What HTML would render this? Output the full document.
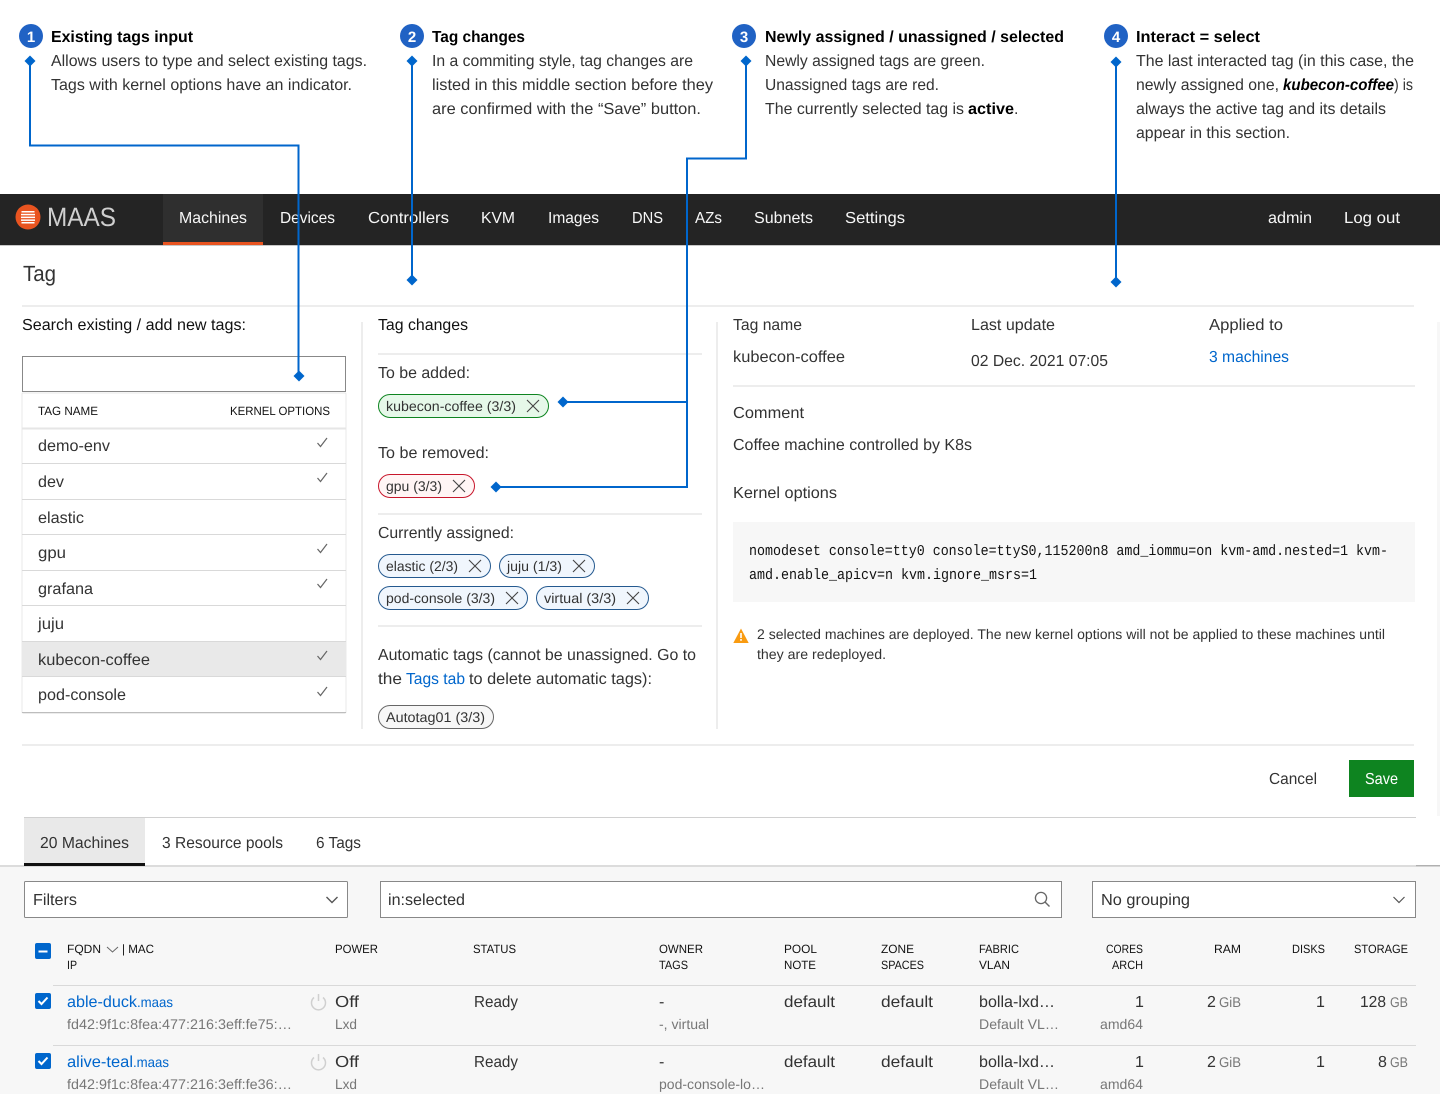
<!DOCTYPE html>
<html lang="en"><head><meta charset="utf-8"><title>MAAS Tag annotated</title>
<style>
html,body{margin:0;padding:0;background:#fff;width:1440px;height:1094px;overflow:hidden}
svg{display:block}
text{font-family:"Liberation Sans",sans-serif;font-size:16px;fill:#333;white-space:pre;text-rendering:geometricPrecision}
.b{font-weight:bold;fill:#000}
.d{fill:#111}
.n{fill:#f7f7f7}
.c{font-size:14px;fill:#333}
.h{font-size:12px;fill:#111}
.g{font-size:14px;fill:#777}
.a{fill:#0066cc}
.as{font-size:14px;fill:#0066cc}
.m{font-family:"Liberation Mono",monospace;font-size:15px;fill:#111}
.num{font-weight:bold;fill:#fff;font-size:15px;text-anchor:middle}
.x{stroke:#444;stroke-width:1.1;fill:none}
.ck{stroke:#666;stroke-width:1.2;fill:none}
.bl{stroke:#0066cc;stroke-width:2;fill:none}
.r{fill:#ededed}
.r2{fill:#d9d9d9}
</style></head><body>
<svg xmlns="http://www.w3.org/2000/svg" width="1440" height="1094" viewBox="0 0 1440 1094">
<rect width="1440" height="1094" fill="#fff"/>

<!-- annotations -->
<circle cx="31" cy="36" r="12" fill="#2062c4"/><text class="num" x="31" y="42">1</text>
<circle cx="412" cy="36" r="12" fill="#2062c4"/><text class="num" x="412" y="42">2</text>
<circle cx="744" cy="36" r="12" fill="#2062c4"/><text class="num" x="744" y="42">3</text>
<circle cx="1116" cy="36" r="12" fill="#2062c4"/><text class="num" x="1116" y="42">4</text>

<text class="b" x="51" y="42" textLength="142" lengthAdjust="spacingAndGlyphs">Existing tags input</text>
<text x="51" y="66" textLength="316" lengthAdjust="spacingAndGlyphs">Allows users to type and select existing tags.</text>
<text x="51" y="90" textLength="301" lengthAdjust="spacingAndGlyphs">Tags with kernel options have an indicator.</text>

<text class="b" x="432" y="42" textLength="93" lengthAdjust="spacingAndGlyphs">Tag changes</text>
<text x="432" y="66" textLength="261" lengthAdjust="spacingAndGlyphs">In a commiting style, tag changes are</text>
<text x="432" y="90" textLength="281" lengthAdjust="spacingAndGlyphs">listed in this middle section before they</text>
<text x="432" y="114" textLength="269" lengthAdjust="spacingAndGlyphs">are confirmed with the “Save” button.</text>

<text class="b" x="765" y="42" textLength="299" lengthAdjust="spacingAndGlyphs">Newly assigned / unassigned / selected</text>
<text x="765" y="66" textLength="220" lengthAdjust="spacingAndGlyphs">Newly assigned tags are green.</text>
<text x="765" y="90" textLength="174" lengthAdjust="spacingAndGlyphs">Unassigned tags are red.</text>
<text x="765" y="114" textLength="199" lengthAdjust="spacingAndGlyphs">The currently selected tag is</text>
<text class="b" x="968" y="114" textLength="46" lengthAdjust="spacingAndGlyphs">active</text>
<text x="1014" y="114">.</text>

<text class="b" x="1136" y="42" textLength="124" lengthAdjust="spacingAndGlyphs">Interact = select</text>
<text x="1136" y="66" textLength="278" lengthAdjust="spacingAndGlyphs">The last interacted tag (in this case, the</text>
<text x="1136" y="90" textLength="143" lengthAdjust="spacingAndGlyphs">newly assigned one,</text>
<text class="b" x="1283" y="90" font-style="italic" textLength="111" lengthAdjust="spacingAndGlyphs">kubecon-coffee</text>
<text x="1394" y="90" textLength="19" lengthAdjust="spacingAndGlyphs">) is</text>
<text x="1136" y="114" textLength="250" lengthAdjust="spacingAndGlyphs">always the active tag and its details</text>
<text x="1136" y="138" textLength="154" lengthAdjust="spacingAndGlyphs">appear in this section.</text>

<!-- nav -->
<rect x="0" y="194" width="1440" height="51" fill="#242424"/>
<rect x="0" y="245" width="1440" height="1" fill="#c8c8c8"/>
<rect x="163" y="194" width="100" height="51" fill="#2f2f2f"/>
<rect x="163" y="242" width="100" height="3" fill="#e95420"/>
<circle cx="28" cy="217" r="12.500" fill="#e95420"/>
<g fill="#fff"><rect x="21.500" y="211" width="13" height="1.500"/><rect x="21" y="213.800" width="14" height="1.500"/><rect x="21" y="216.600" width="14" height="1.500"/><rect x="21" y="219.400" width="14" height="1.500"/><rect x="21.500" y="222" width="13" height="1.500"/></g>
<text x="47" y="226" style="font-size:26.500px;fill:#cfcfcf" textLength="69" lengthAdjust="spacingAndGlyphs">MAAS</text>
<text class="n" x="179" y="223" textLength="68" lengthAdjust="spacingAndGlyphs">Machines</text>
<text class="n" x="280" y="223" textLength="55" lengthAdjust="spacingAndGlyphs">Devices</text>
<text class="n" x="368" y="223" textLength="81" lengthAdjust="spacingAndGlyphs">Controllers</text>
<text class="n" x="481" y="223" textLength="34" lengthAdjust="spacingAndGlyphs">KVM</text>
<text class="n" x="548" y="223" textLength="51" lengthAdjust="spacingAndGlyphs">Images</text>
<text class="n" x="632" y="223" textLength="31" lengthAdjust="spacingAndGlyphs">DNS</text>
<text class="n" x="695" y="223" textLength="27" lengthAdjust="spacingAndGlyphs">AZs</text>
<text class="n" x="754" y="223" textLength="59" lengthAdjust="spacingAndGlyphs">Subnets</text>
<text class="n" x="845" y="223" textLength="60" lengthAdjust="spacingAndGlyphs">Settings</text>
<text class="n" x="1268" y="223" textLength="44" lengthAdjust="spacingAndGlyphs">admin</text>
<text class="n" x="1344" y="223" textLength="56" lengthAdjust="spacingAndGlyphs">Log out</text>

<!-- header -->
<text x="23" y="281" style="font-size:22px" textLength="33" lengthAdjust="spacingAndGlyphs">Tag</text>
<rect class="r" x="22" y="305" width="1392" height="2"/>
<rect x="1437" y="322" width="3" height="494" fill="#f7f7f7"/>

<!-- left column -->
<text class="d" x="22" y="330" textLength="224" lengthAdjust="spacingAndGlyphs">Search existing / add new tags:</text>
<rect x="22.500" y="356.500" width="323" height="35" fill="#fff" stroke="#888"/>
<rect x="22" y="393" width="324" height="320" rx="1" fill="#fff" stroke="#e8e8e8"/>
<rect x="22" y="712" width="324" height="1" fill="#bdbdbd"/>
<rect x="23" y="713" width="322" height="1" fill="#ececec"/>
<text class="h" x="38" y="415" textLength="60" lengthAdjust="spacingAndGlyphs">TAG NAME</text>
<text class="h" x="230" y="415" textLength="100" lengthAdjust="spacingAndGlyphs">KERNEL OPTIONS</text>
<rect x="22" y="641" width="324" height="36" fill="#e9e9e9"/>
<rect x="22" y="427.500" width="324" height="2" fill="#e6e6e6"/>
<g class="r2">
<rect x="22" y="463" width="324" height="1"/><rect x="22" y="499" width="324" height="1"/><rect x="22" y="534" width="324" height="1"/><rect x="22" y="570" width="324" height="1"/><rect x="22" y="605" width="324" height="1"/><rect x="22" y="641" width="324" height="1"/><rect x="22" y="676" width="324" height="1"/>
</g>
<text x="38" y="451" textLength="72" lengthAdjust="spacingAndGlyphs">demo-env</text>
<text x="38" y="487" textLength="26" lengthAdjust="spacingAndGlyphs">dev</text>
<text x="38" y="523" textLength="46" lengthAdjust="spacingAndGlyphs">elastic</text>
<text x="38" y="558" textLength="28" lengthAdjust="spacingAndGlyphs">gpu</text>
<text x="38" y="594" textLength="55" lengthAdjust="spacingAndGlyphs">grafana</text>
<text x="38" y="629" textLength="26" lengthAdjust="spacingAndGlyphs">juju</text>
<text x="38" y="665" textLength="112" lengthAdjust="spacingAndGlyphs">kubecon-coffee</text>
<text x="38" y="700" textLength="88" lengthAdjust="spacingAndGlyphs">pod-console</text>
<g class="ck">
<path d="M317.500 443l3 3.500l6.500-8.500"/>
<path d="M317.500 478l3 3.500l6.500-8.500"/>
<path d="M317.500 549l3 3.500l6.500-8.500"/>
<path d="M317.500 584l3 3.500l6.500-8.500"/>
<path d="M317.500 656l3 3.500l6.500-8.500"/>
<path d="M317.500 692l3 3.500l6.500-8.500"/>
</g>

<!-- dividers -->
<rect class="r" x="361" y="322" width="2" height="407"/>
<rect class="r" x="716" y="322" width="2" height="407"/>

<!-- middle column -->
<text class="d" x="378" y="330" textLength="90" lengthAdjust="spacingAndGlyphs">Tag changes</text>
<rect class="r" x="378" y="353" width="324" height="2"/>
<text x="378" y="378" textLength="92" lengthAdjust="spacingAndGlyphs">To be added:</text>
<rect x="378.500" y="394.500" width="170" height="23" rx="11.500" fill="#e6f8e9" stroke="#0e8420"/>
<text class="c" x="386" y="411" textLength="130" lengthAdjust="spacingAndGlyphs">kubecon-coffee (3/3)</text>
<path class="x" d="M527 400l12 12M539 400l-12 12"/>
<text x="378" y="458" textLength="111" lengthAdjust="spacingAndGlyphs">To be removed:</text>
<rect x="378.500" y="474.500" width="96" height="23" rx="11.500" fill="#fff5f5" stroke="#c7162b"/>
<text class="c" x="386" y="491" textLength="56" lengthAdjust="spacingAndGlyphs">gpu (3/3)</text>
<path class="x" d="M453 480l12 12M465 480l-12 12"/>
<rect class="r" x="378" y="513" width="324" height="2"/>
<text x="378" y="538" textLength="136" lengthAdjust="spacingAndGlyphs">Currently assigned:</text>
<rect x="378.500" y="554.500" width="112" height="23" rx="11.500" fill="#f0f6fd" stroke="#24598f"/>
<text class="c" x="386" y="571" textLength="72" lengthAdjust="spacingAndGlyphs">elastic (2/3)</text>
<path class="x" d="M469 560l12 12M481 560l-12 12"/>
<rect x="499.500" y="554.500" width="95" height="23" rx="11.500" fill="#f0f6fd" stroke="#24598f"/>
<text class="c" x="507" y="571" textLength="55" lengthAdjust="spacingAndGlyphs">juju (1/3)</text>
<path class="x" d="M573 560l12 12M585 560l-12 12"/>
<rect x="378.500" y="586.500" width="149" height="23" rx="11.500" fill="#f0f6fd" stroke="#24598f"/>
<text class="c" x="386" y="603" textLength="109" lengthAdjust="spacingAndGlyphs">pod-console (3/3)</text>
<path class="x" d="M506 592l12 12M518 592l-12 12"/>
<rect x="536.500" y="586.500" width="112" height="23" rx="11.500" fill="#f0f6fd" stroke="#24598f"/>
<text class="c" x="544" y="603" textLength="72" lengthAdjust="spacingAndGlyphs">virtual (3/3)</text>
<path class="x" d="M627 592l12 12M639 592l-12 12"/>
<rect class="r" x="378" y="625" width="324" height="2"/>
<text x="378" y="660" textLength="318" lengthAdjust="spacingAndGlyphs">Automatic tags (cannot be unassigned. Go to</text>
<text x="378" y="684" textLength="24" lengthAdjust="spacingAndGlyphs">the</text>
<text class="a" x="406" y="684" textLength="59" lengthAdjust="spacingAndGlyphs">Tags tab</text>
<text x="469" y="684" textLength="183" lengthAdjust="spacingAndGlyphs">to delete automatic tags):</text>
<rect x="378.500" y="705.500" width="115" height="23" rx="11.500" fill="#f7f7f7" stroke="#666"/>
<text class="c" x="386" y="722" textLength="99" lengthAdjust="spacingAndGlyphs">Autotag01 (3/3)</text>

<!-- right column -->
<text x="733" y="330" textLength="69" lengthAdjust="spacingAndGlyphs">Tag name</text>
<text x="971" y="330" textLength="84" lengthAdjust="spacingAndGlyphs">Last update</text>
<text x="1209" y="330" textLength="74" lengthAdjust="spacingAndGlyphs">Applied to</text>
<text x="733" y="362" textLength="112" lengthAdjust="spacingAndGlyphs">kubecon-coffee</text>
<text x="971" y="366" textLength="137" lengthAdjust="spacingAndGlyphs">02 Dec. 2021 07:05</text>
<text class="a" x="1209" y="362" textLength="80" lengthAdjust="spacingAndGlyphs">3 machines</text>
<rect class="r" x="733" y="385" width="682" height="2"/>
<text x="733" y="418" textLength="71" lengthAdjust="spacingAndGlyphs">Comment</text>
<text x="733" y="450" textLength="239" lengthAdjust="spacingAndGlyphs">Coffee machine controlled by K8s</text>
<text x="733" y="498" textLength="104" lengthAdjust="spacingAndGlyphs">Kernel options</text>
<rect x="733" y="522" width="682" height="80" fill="#f7f7f7"/>
<text class="m" x="749" y="555" textLength="639" lengthAdjust="spacingAndGlyphs">nomodeset console=tty0 console=ttyS0,115200n8 amd_iommu=on kvm-amd.nested=1 kvm-</text>
<text class="m" x="749" y="579" textLength="288" lengthAdjust="spacingAndGlyphs">amd.enable_apicv=n kvm.ignore_msrs=1</text>
<path d="M741 628.500l7.700 14.500h-15.400z" fill="#f99b11"/>
<rect x="740.200" y="633" width="1.600" height="5" fill="#fff"/><rect x="740.200" y="639" width="1.600" height="1.800" fill="#fff"/>
<text class="c" x="757" y="639" textLength="628" lengthAdjust="spacingAndGlyphs">2 selected machines are deployed. The new kernel options will not be applied to these machines until</text>
<text class="c" x="757" y="659" textLength="129" lengthAdjust="spacingAndGlyphs">they are redeployed.</text>

<rect class="r" x="22" y="744" width="1392" height="2"/>
<text x="1269" y="784" textLength="48" lengthAdjust="spacingAndGlyphs">Cancel</text>
<rect x="1349" y="760" width="65" height="37" fill="#0e8420"/>
<text x="1365" y="784" style="fill:#fff" textLength="33" lengthAdjust="spacingAndGlyphs">Save</text>

<!-- tabs -->
<rect x="24" y="817" width="1392" height="1" fill="#d0d0d0"/>
<rect x="0" y="866" width="1440" height="228" fill="#f7f7f7"/>
<rect x="0" y="865" width="1416" height="2" fill="#dcdcdc"/>
<rect x="1416" y="865" width="24" height="1.500" fill="#b0b0b0"/>
<rect x="24" y="818" width="121" height="45" fill="#e9e9e9"/>
<rect x="24" y="863" width="121" height="3" fill="#111"/>
<text x="40" y="848" textLength="89" lengthAdjust="spacingAndGlyphs">20 Machines</text>
<text x="162" y="848" textLength="121" lengthAdjust="spacingAndGlyphs">3 Resource pools</text>
<text x="316" y="848" textLength="45" lengthAdjust="spacingAndGlyphs">6 Tags</text>

<!-- filters -->
<rect x="24.500" y="881.500" width="323" height="36" rx="1" fill="#fff" stroke="#888"/>
<text x="33" y="905" textLength="44" lengthAdjust="spacingAndGlyphs">Filters</text>
<path d="M326.500 897l5.500 5.500l5.500-5.500" fill="none" stroke="#555" stroke-width="1.400"/>
<rect x="380.500" y="881.500" width="681" height="36" fill="#fff" stroke="#888"/>
<text x="388" y="905" textLength="77" lengthAdjust="spacingAndGlyphs">in:selected</text>
<circle cx="1041" cy="898" r="5.600" fill="none" stroke="#666" stroke-width="1.300"/><path d="M1045 902l4.500 4.500" stroke="#666" stroke-width="1.400"/>
<rect x="1092.500" y="881.500" width="323" height="36" fill="#fff" stroke="#888"/>
<text x="1101" y="905" textLength="89" lengthAdjust="spacingAndGlyphs">No grouping</text>
<path d="M1393.500 897l5.500 5.500l5.500-5.500" fill="none" stroke="#555" stroke-width="1.200"/>

<!-- table head -->
<rect x="35" y="943" width="16" height="16" rx="2" fill="#0066cc"/><rect x="38.500" y="950.500" width="9" height="2" fill="#fff"/>
<text class="h" x="67" y="953" textLength="34" lengthAdjust="spacingAndGlyphs">FQDN</text>
<path d="M107 947l5.500 5l5.500-5" fill="none" stroke="#666"/>
<text class="h" x="122" y="953" textLength="32" lengthAdjust="spacingAndGlyphs">| MAC</text>
<text class="h" x="67" y="969" textLength="10" lengthAdjust="spacingAndGlyphs">IP</text>
<text class="h" x="335" y="953" textLength="43" lengthAdjust="spacingAndGlyphs">POWER</text>
<text class="h" x="473" y="953" textLength="43" lengthAdjust="spacingAndGlyphs">STATUS</text>
<text class="h" x="659" y="953" textLength="44" lengthAdjust="spacingAndGlyphs">OWNER</text>
<text class="h" x="659" y="969" textLength="29" lengthAdjust="spacingAndGlyphs">TAGS</text>
<text class="h" x="784" y="953" textLength="33" lengthAdjust="spacingAndGlyphs">POOL</text>
<text class="h" x="784" y="969" textLength="32" lengthAdjust="spacingAndGlyphs">NOTE</text>
<text class="h" x="881" y="953" textLength="33" lengthAdjust="spacingAndGlyphs">ZONE</text>
<text class="h" x="881" y="969" textLength="43" lengthAdjust="spacingAndGlyphs">SPACES</text>
<text class="h" x="979" y="953" textLength="40" lengthAdjust="spacingAndGlyphs">FABRIC</text>
<text class="h" x="979" y="969" textLength="31" lengthAdjust="spacingAndGlyphs">VLAN</text>
<text class="h" x="1106" y="953" textLength="37" lengthAdjust="spacingAndGlyphs">CORES</text>
<text class="h" x="1112" y="969" textLength="31" lengthAdjust="spacingAndGlyphs">ARCH</text>
<text class="h" x="1214" y="953" textLength="27" lengthAdjust="spacingAndGlyphs">RAM</text>
<text class="h" x="1292" y="953" textLength="33" lengthAdjust="spacingAndGlyphs">DISKS</text>
<text class="h" x="1354" y="953" textLength="54" lengthAdjust="spacingAndGlyphs">STORAGE</text>
<rect x="53" y="985" width="1363" height="1" fill="#d9d9d9"/>
<rect x="53" y="1045" width="1363" height="1" fill="#d9d9d9"/>

<!-- row 1 -->
<rect x="35" y="993" width="16" height="16" rx="2" fill="#0066cc"/><path d="M38.500 1001l3 3l6-6.500" fill="none" stroke="#fff" stroke-width="2"/>
<text class="a" x="67" y="1007" textLength="70" lengthAdjust="spacingAndGlyphs">able-duck</text>
<text class="as" x="137" y="1007" textLength="36" lengthAdjust="spacingAndGlyphs">.maas</text>
<text class="g" x="67" y="1029" textLength="225" lengthAdjust="spacingAndGlyphs">fd42:9f1c:8fea:477:216:3eff:fe75:…</text>
<path d="M314 997.500a7 7 0 1 0 9 0M318.500 994v7" fill="none" stroke="#d0d0d0" stroke-width="1.500"/>
<text x="335" y="1007" textLength="24" lengthAdjust="spacingAndGlyphs">Off</text>
<text class="g" x="335" y="1029" textLength="22" lengthAdjust="spacingAndGlyphs">Lxd</text>
<text x="474" y="1007" textLength="44" lengthAdjust="spacingAndGlyphs">Ready</text>
<text x="659" y="1007">-</text>
<text class="g" x="659" y="1029" textLength="50" lengthAdjust="spacingAndGlyphs">-, virtual</text>
<text x="784" y="1007" textLength="51" lengthAdjust="spacingAndGlyphs">default</text>
<text x="881" y="1007" textLength="52" lengthAdjust="spacingAndGlyphs">default</text>
<text x="979" y="1007" textLength="76" lengthAdjust="spacingAndGlyphs">bolla-lxd…</text>
<text class="g" x="979" y="1029" textLength="80" lengthAdjust="spacingAndGlyphs">Default VL…</text>
<text x="1135" y="1007">1</text>
<text class="g" x="1100" y="1029" textLength="43" lengthAdjust="spacingAndGlyphs">amd64</text>
<text x="1207" y="1007">2</text>
<text class="g" x="1219" y="1007" textLength="22" lengthAdjust="spacingAndGlyphs">GiB</text>
<text x="1316" y="1007">1</text>
<text x="1360" y="1007" textLength="26" lengthAdjust="spacingAndGlyphs">128</text>
<text class="g" x="1390" y="1007" textLength="18" lengthAdjust="spacingAndGlyphs">GB</text>

<!-- row 2 -->
<rect x="35" y="1053" width="16" height="16" rx="2" fill="#0066cc"/><path d="M38.500 1061l3 3l6-6.500" fill="none" stroke="#fff" stroke-width="2"/>
<text class="a" x="67" y="1067" textLength="66" lengthAdjust="spacingAndGlyphs">alive-teal</text>
<text class="as" x="133" y="1067" textLength="36" lengthAdjust="spacingAndGlyphs">.maas</text>
<text class="g" x="67" y="1089" textLength="225" lengthAdjust="spacingAndGlyphs">fd42:9f1c:8fea:477:216:3eff:fe36:…</text>
<path d="M314 1057.500a7 7 0 1 0 9 0M318.500 1054v7" fill="none" stroke="#d0d0d0" stroke-width="1.500"/>
<text x="335" y="1067" textLength="24" lengthAdjust="spacingAndGlyphs">Off</text>
<text class="g" x="335" y="1089" textLength="22" lengthAdjust="spacingAndGlyphs">Lxd</text>
<text x="474" y="1067" textLength="44" lengthAdjust="spacingAndGlyphs">Ready</text>
<text x="659" y="1067">-</text>
<text class="g" x="659" y="1089" textLength="106" lengthAdjust="spacingAndGlyphs">pod-console-lo…</text>
<text x="784" y="1067" textLength="51" lengthAdjust="spacingAndGlyphs">default</text>
<text x="881" y="1067" textLength="52" lengthAdjust="spacingAndGlyphs">default</text>
<text x="979" y="1067" textLength="76" lengthAdjust="spacingAndGlyphs">bolla-lxd…</text>
<text class="g" x="979" y="1089" textLength="80" lengthAdjust="spacingAndGlyphs">Default VL…</text>
<text x="1135" y="1067">1</text>
<text class="g" x="1100" y="1089" textLength="43" lengthAdjust="spacingAndGlyphs">amd64</text>
<text x="1207" y="1067">2</text>
<text class="g" x="1219" y="1067" textLength="22" lengthAdjust="spacingAndGlyphs">GiB</text>
<text x="1316" y="1067">1</text>
<text x="1378" y="1067">8</text>
<text class="g" x="1390" y="1067" textLength="18" lengthAdjust="spacingAndGlyphs">GB</text>

<!-- blue connector lines -->
<path class="bl" d="M30 61V145.500H298.500V376"/>
<path class="bl" d="M412 61V280"/>
<path class="bl" d="M746 61V158.500H687V487H496"/>
<path class="bl" d="M687 402H563"/>
<path class="bl" d="M1116 62V282"/>
<g fill="#0066cc">
<path d="M30 55.500l5.500 5.500l-5.500 5.500l-5.500-5.500z"/>
<path d="M299 370.500l5.500 5.500l-5.500 5.500l-5.500-5.500z"/>
<path d="M412 55.500l5.500 5.500l-5.500 5.500l-5.500-5.500z"/>
<path d="M412 274.500l5.500 5.500l-5.500 5.500l-5.500-5.500z"/>
<path d="M746 55.500l5.500 5.500l-5.500 5.500l-5.500-5.500z"/>
<path d="M563 396.500l5.500 5.500l-5.500 5.500l-5.500-5.500z"/>
<path d="M496 481.500l5.500 5.500l-5.500 5.500l-5.500-5.500z"/>
<path d="M1116 56.500l5.500 5.500l-5.500 5.500l-5.500-5.500z"/>
<path d="M1116 276.500l5.500 5.500l-5.500 5.500l-5.500-5.500z"/>
</g>
</svg>
</body></html>
